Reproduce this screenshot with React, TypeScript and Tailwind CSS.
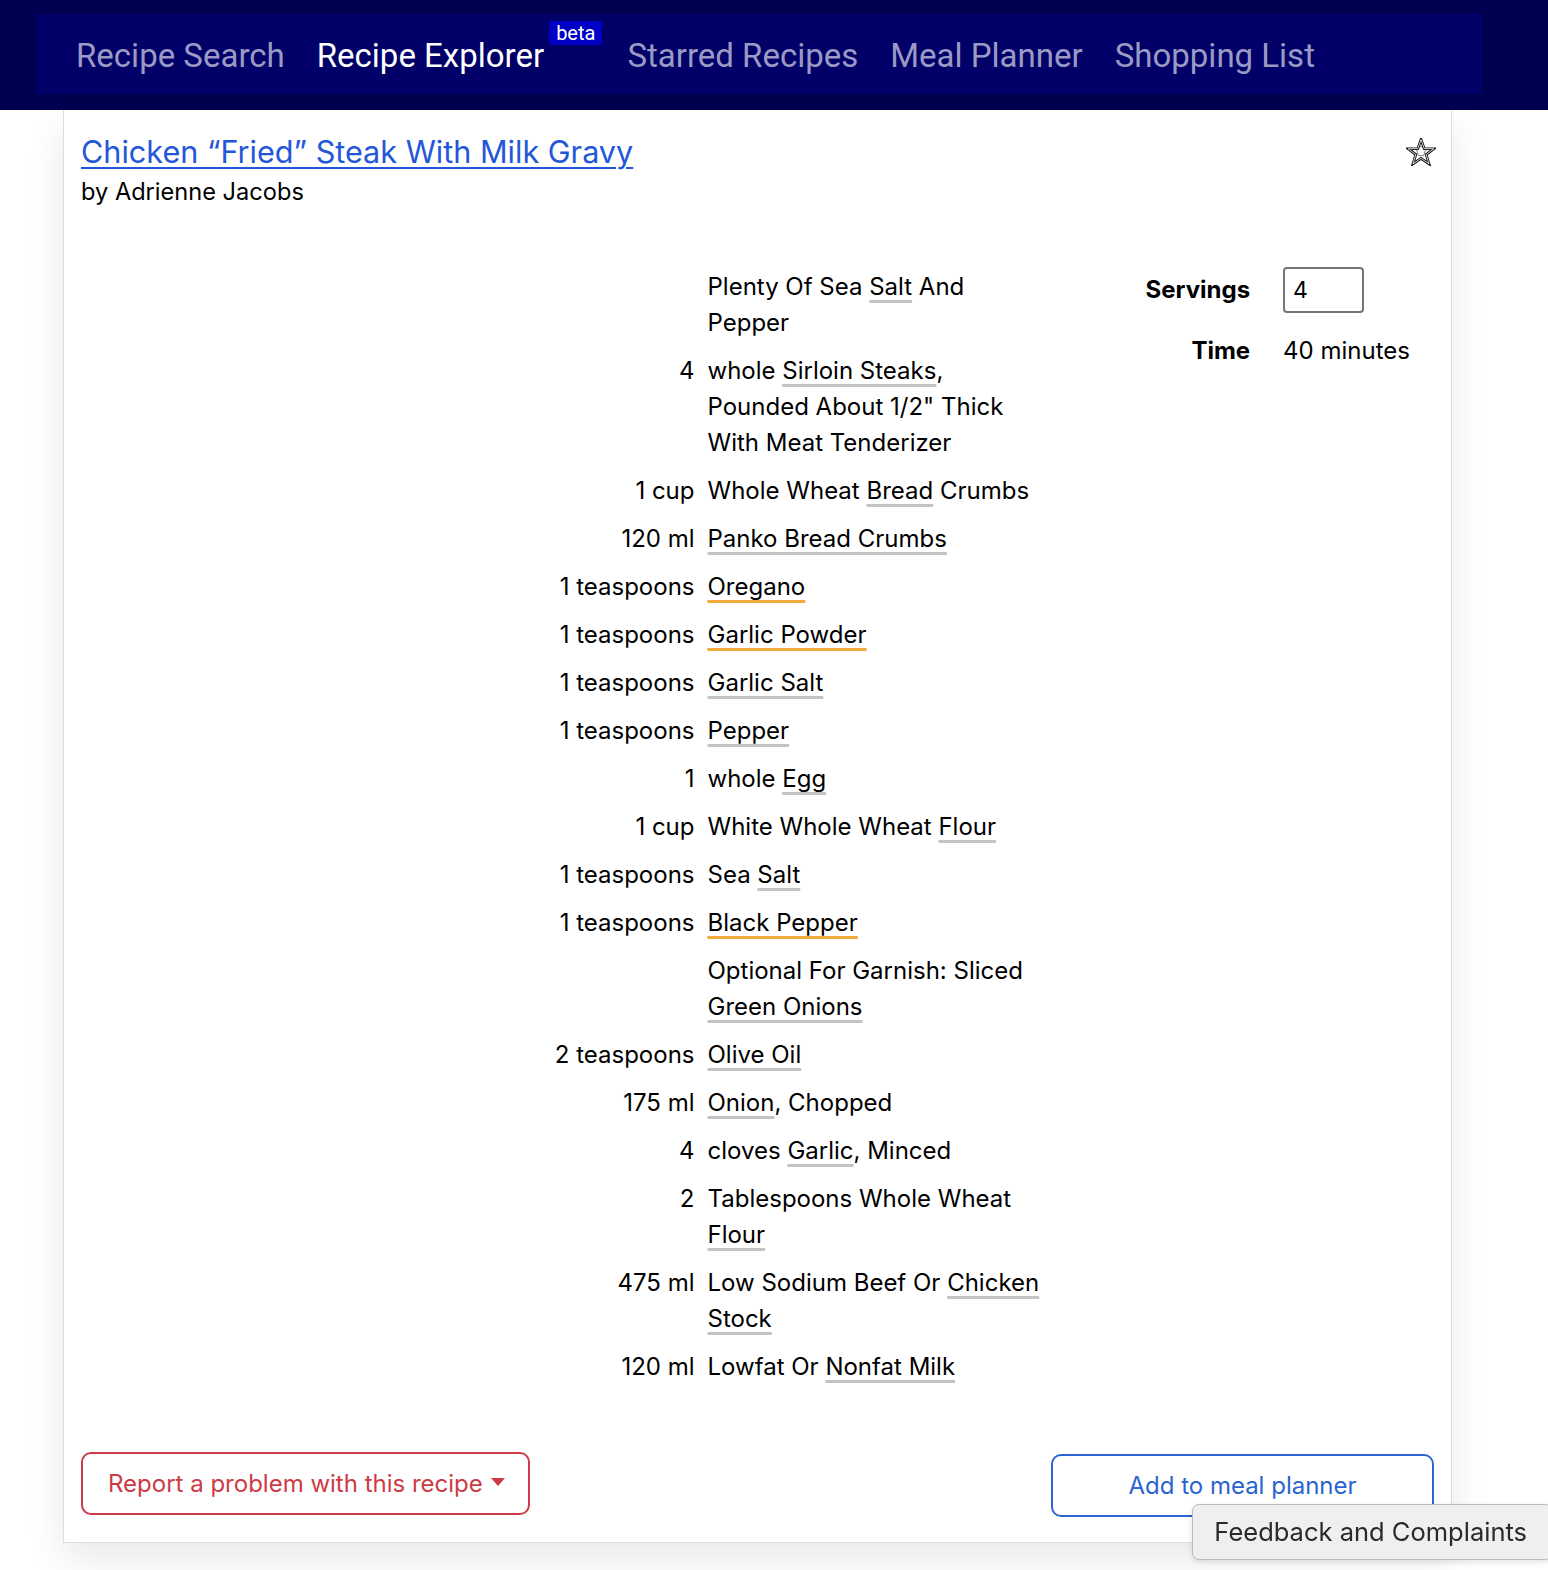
import { Fragment } from 'react';

type Seg = { t: string; u?: 'gray' | 'orange' };
type Ingredient = { qty: string; lines: Seg[][] };

const ingredients: Ingredient[] = [
  { qty: '', lines: [[{ t: 'Plenty Of Sea ' }, { t: 'Salt', u: 'gray' }, { t: ' And' }], [{ t: 'Pepper' }]] },
  {
    qty: '4',
    lines: [
      [{ t: 'whole ' }, { t: 'Sirloin Steaks', u: 'gray' }, { t: ',' }],
      [{ t: 'Pounded About 1/2" Thick' }],
      [{ t: 'With Meat Tenderizer' }],
    ],
  },
  { qty: '1 cup', lines: [[{ t: 'Whole Wheat ' }, { t: 'Bread', u: 'gray' }, { t: ' Crumbs' }]] },
  { qty: '120 ml', lines: [[{ t: 'Panko Bread Crumbs', u: 'gray' }]] },
  { qty: '1 teaspoons', lines: [[{ t: 'Oregano', u: 'orange' }]] },
  { qty: '1 teaspoons', lines: [[{ t: 'Garlic Powder', u: 'orange' }]] },
  { qty: '1 teaspoons', lines: [[{ t: 'Garlic Salt', u: 'gray' }]] },
  { qty: '1 teaspoons', lines: [[{ t: 'Pepper', u: 'gray' }]] },
  { qty: '1', lines: [[{ t: 'whole ' }, { t: 'Egg', u: 'gray' }]] },
  { qty: '1 cup', lines: [[{ t: 'White Whole Wheat ' }, { t: 'Flour', u: 'gray' }]] },
  { qty: '1 teaspoons', lines: [[{ t: 'Sea ' }, { t: 'Salt', u: 'gray' }]] },
  { qty: '1 teaspoons', lines: [[{ t: 'Black Pepper', u: 'orange' }]] },
  { qty: '', lines: [[{ t: 'Optional For Garnish: Sliced' }], [{ t: 'Green Onions', u: 'gray' }]] },
  { qty: '2 teaspoons', lines: [[{ t: 'Olive Oil', u: 'gray' }]] },
  { qty: '175 ml', lines: [[{ t: 'Onion', u: 'gray' }, { t: ', Chopped' }]] },
  { qty: '4', lines: [[{ t: 'cloves ' }, { t: 'Garlic', u: 'gray' }, { t: ', Minced' }]] },
  { qty: '2', lines: [[{ t: 'Tablespoons Whole Wheat' }], [{ t: 'Flour', u: 'gray' }]] },
  {
    qty: '475 ml',
    lines: [[{ t: 'Low Sodium Beef Or ' }, { t: 'Chicken', u: 'gray' }], [{ t: 'Stock', u: 'gray' }]],
  },
  { qty: '120 ml', lines: [[{ t: 'Lowfat Or ' }, { t: 'Nonfat Milk', u: 'gray' }]] },
];

const navItems = ['Recipe Search', 'Recipe Explorer', 'Starred Recipes', 'Meal Planner', 'Shopping List'];

function Segment({ seg }: { seg: Seg }) {
  if (!seg.u) return <span>{seg.t}</span>;
  return (
    <a
      href="#"
      className={`underline decoration-[3px] underline-offset-[5px] ${
        seg.u === 'orange' ? 'decoration-[#f2a93b]' : 'decoration-[#c4c4c4]'
      }`}
    >
      {seg.t}
    </a>
  );
}

function StarIcon() {
  const pts = '14,1.5 17.1,10.2 26.4,10.4 19,16 21.7,24.9 14,19.6 6.3,24.9 9,16 1.6,10.4 10.9,10.2';
  return (
    <svg width="30" height="28" viewBox="0 0 28 27">
      <polygon points={pts} fill="none" stroke="#111" strokeWidth="2.6" strokeLinejoin="miter" />
      <polygon points={pts} fill="none" stroke="#fff" strokeWidth="0.8" strokeLinejoin="miter" />
      <polygon points="14,8 18.2,11.5 16.6,17 11.4,17 9.8,11.5" fill="none" stroke="#555" strokeWidth="0.7" />
    </svg>
  );
}

export default function App() {
  return (
    <div className="relative min-h-screen bg-white text-black font-['Inter','Liberation_Sans',sans-serif]">
      {/* Navbar */}
      <nav className="h-[110px] bg-[#000050] pl-[36px] pt-[14px]">
        <div className="h-[80px] w-[1446px] bg-[#000068] flex items-center pl-[40px] pt-[4px] gap-[32px] font-['Roboto','Liberation_Sans',sans-serif] text-[33px]">
          {navItems.map((item) =>
            item === 'Recipe Explorer' ? (
              <div key={item} className="flex items-center">
                <span className="text-white">{item}</span>
                <span className="relative -top-[23px] ml-[5px] mr-[-7px] rounded-[3px] bg-[#0000c4] px-[7px] text-[20px] leading-[24px] text-white">
                  beta
                </span>
              </div>
            ) : (
              <span key={item} className="text-[#9a9ac4]">
                {item}
              </span>
            )
          )}
        </div>
      </nav>

      {/* Recipe card */}
      <main className="ml-[63px] w-[1389px] border-x border-b border-[#dddddd] px-[17px] pb-[25px] shadow-[0_16px_36px_rgba(0,0,0,0.09)]">
        <div className="flex justify-between pt-[22px]">
          <div>
            <a href="#" className="text-[30.6px] leading-[40px] text-[#2356d8] underline underline-offset-[4px] decoration-[2px]">
              Chicken “Fried” Steak With Milk Gravy
            </a>
            <div className="mt-[3px] text-[23.6px] leading-[34px]">by Adrienne Jacobs</div>
          </div>
          <span className="mt-[6px] mr-[-2px]">
            <StarIcon />
          </span>
        </div>

        <div className="mt-[54px] flex justify-end">
          {/* Ingredients */}
          <div className="grid grid-cols-[auto_330px] gap-x-[13px] text-[24px] leading-[36px]">
            {ingredients.map((ing, i) => (
              <Fragment key={i}>
                <div className="py-[6px] text-right whitespace-nowrap">{ing.qty}</div>
                <div className="py-[6px] whitespace-nowrap">
                  {ing.lines.map((line, j) => (
                    <div key={j}>
                      {line.map((seg, k) => (
                        <Segment key={k} seg={seg} />
                      ))}
                    </div>
                  ))}
                </div>
              </Fragment>
            ))}
          </div>

          {/* Servings / time */}
          <div className="ml-[108px] mr-[24px] mt-[4px] grid h-fit grid-cols-[auto_auto] items-center gap-x-[33px] gap-y-[20px] text-[24px]">
            <div className="text-right font-bold">Servings</div>
            <input
              type="text"
              defaultValue="4"
              className="h-[46px] w-[81px] rounded-[4px] border-2 border-[#767676] px-[8px] text-[23px] outline-none"
            />
            <div className="text-right font-bold">Time</div>
            <div>40 minutes</div>
          </div>
        </div>

        {/* Actions */}
        <div className="mt-[61px] flex items-start justify-between">
          <button className="flex h-[63px] items-center gap-[8px] rounded-[10px] border-2 border-[#cc3b46] pl-[25px] pr-[23px] text-[24px] text-[#cc3b46]">
            Report a problem with this recipe
            <svg width="14" height="8" viewBox="0 0 14 8" className="mt-[-4px]">
              <path d="M0 0h14L7 8z" fill="#cc3b46" />
            </svg>
          </button>
          <button className="mt-[2px] h-[63px] w-[383px] rounded-[10px] border-2 border-[#2a64d0] text-[24px] text-[#2a64d0]">
            Add to meal planner
          </button>
        </div>
      </main>

      {/* Feedback tab */}
      <button className="fixed bottom-[10px] right-[-4px] h-[56px] rounded-[7px] border border-[#bdbdbd] bg-[#efefef] pl-[21px] pr-[24px] text-[25.5px] text-[#2a2a2a] shadow-[0_2px_6px_rgba(0,0,0,0.12)]">
        Feedback and Complaints
      </button>
    </div>
  );
}
